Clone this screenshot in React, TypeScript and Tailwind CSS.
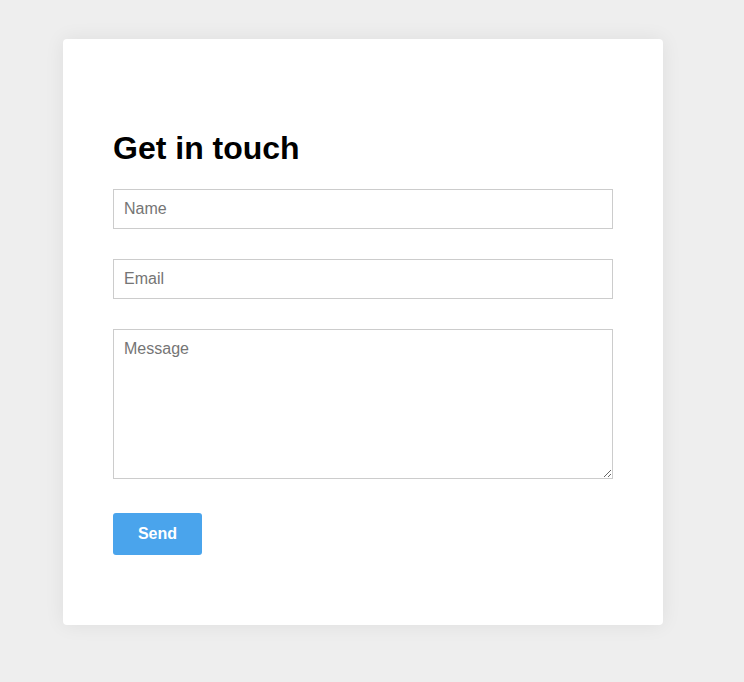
export default function App() {
  return (
    <div className="min-h-screen w-full bg-[#eeeeee] pt-[39px] font-['Liberation_Sans',Arial,sans-serif]">
      <div className="ml-[63px] w-[600px] h-[586px] rounded-[4px] bg-white px-[50px] pt-[50px] shadow-[0_0_20px_rgba(0,0,0,0.07)]">
        <h1 className="mt-[41px] mb-[22px] text-[32px] leading-[37px] font-bold text-black">
          Get in touch
        </h1>
        <form className="flex flex-col" onSubmit={(e) => e.preventDefault()}>
          <input
            type="text"
            placeholder="Name"
            className="h-[40px] w-full border border-[#cccccc] px-[10px] text-[16px] text-black placeholder:text-[#757575] outline-none"
          />
          <input
            type="email"
            placeholder="Email"
            className="mt-[30px] h-[40px] w-full border border-[#cccccc] px-[10px] text-[16px] text-black placeholder:text-[#757575] outline-none"
          />
          <textarea
            placeholder="Message"
            className="mt-[30px] h-[150px] w-full border border-[#cccccc] px-[10px] py-[9px] text-[16px] leading-[19px] text-black placeholder:text-[#757575] outline-none"
          />
          <button
            type="submit"
            className="mt-[34px] h-[42px] w-[89px] rounded-[3px] bg-[#4aa4ec] text-[16px] font-bold text-white"
          >
            Send
          </button>
        </form>
      </div>
    </div>
  );
}
